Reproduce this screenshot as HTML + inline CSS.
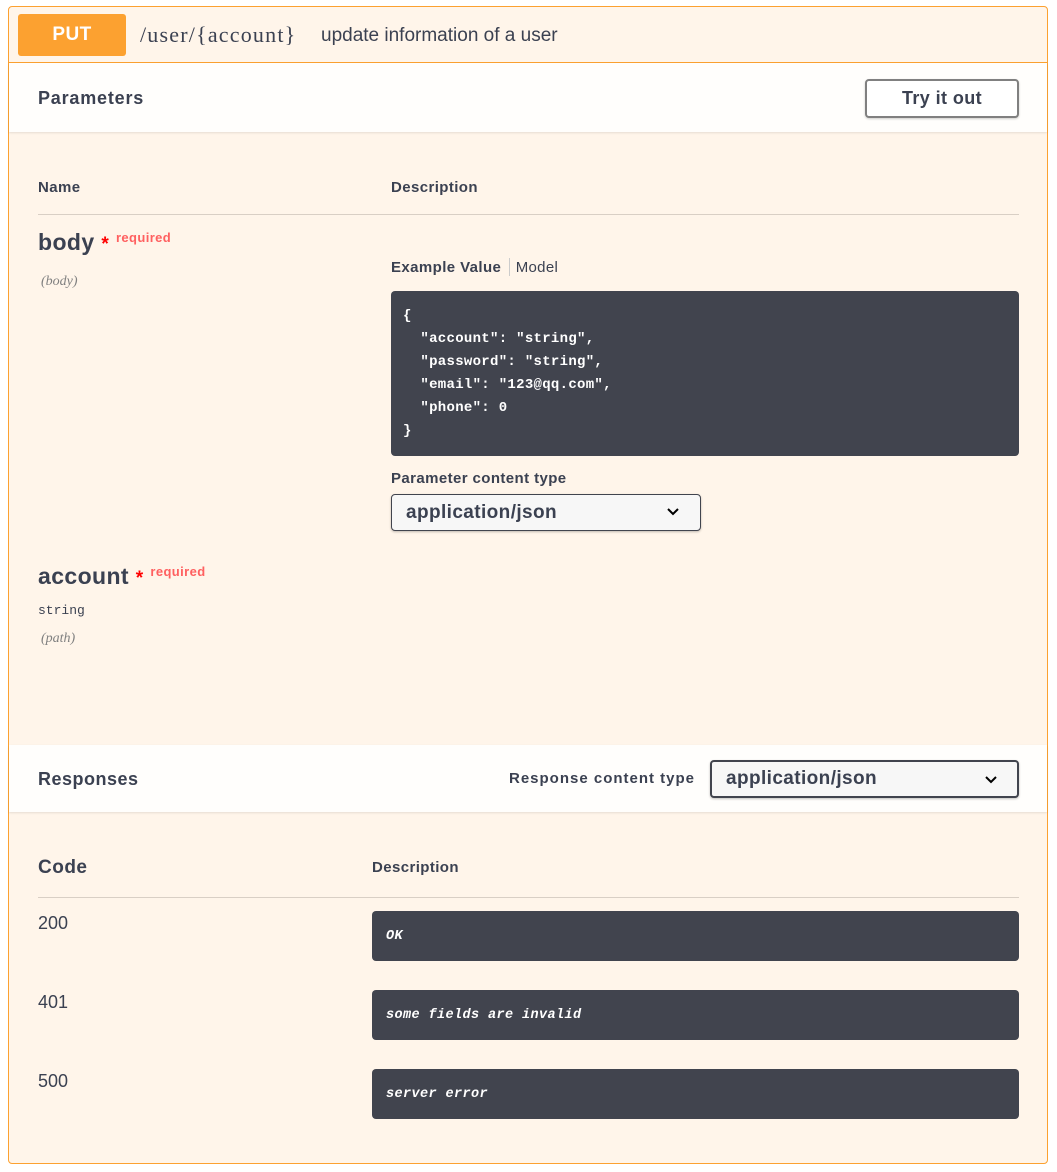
<!DOCTYPE html>
<html><head><meta charset="utf-8"><style>
*{margin:0;padding:0;box-sizing:border-box}
body{width:1057px;height:1172px;background:#fff;font-family:"Liberation Sans",sans-serif;color:#3b4151;position:relative;overflow:hidden}
.a{position:absolute}
.box{left:8px;top:6px;width:1040px;height:1158px;border:1px solid #fca130;border-radius:4px;background:#fff5ea}
.b{font-weight:bold;letter-spacing:.4px}
.dark{background:#41444e;border-radius:4px}
.mono{font-family:"Liberation Mono",monospace;color:#fff;font-weight:bold}
.sel{border:1px solid #41444e;border-radius:4px;background:#f7f7f7;box-shadow:0 1px 2px rgba(0,0,0,.25)}
</style></head><body>
<div class="a box"></div>
<div class="a" style="left:9px;top:62px;width:1038px;height:1px;background:#fca130"></div>
<div class="a b" style="left:18px;top:14px;width:108px;height:42px;background:#fca130;border-radius:3px;color:#fff;font-size:19px;text-align:center;line-height:42px">PUT</div>
<div class="a" style="left:140px;top:22px;font-family:'Liberation Serif',serif;font-size:22px;letter-spacing:1.2px;color:#3b4151">/user/{account}</div>
<div class="a" style="left:321px;top:25px;font-size:19px;color:#3b4151">update information of a user</div>

<div class="a" style="left:9px;top:63px;width:1038px;height:69px;background:rgba(255,255,255,.85);box-shadow:0 1px 2px rgba(0,0,0,.1)"></div>
<div class="a b" style="left:38px;top:88px;font-size:18px;letter-spacing:.8px">Parameters</div>
<div class="a b" style="left:865px;top:79px;width:154px;height:39px;border:2px solid #808080;border-radius:4px;background:#fff;font-size:18px;text-align:center;line-height:35px;box-shadow:0 1px 2px rgba(0,0,0,.2)">Try it out</div>

<div class="a b" style="left:38px;top:179px;font-size:15px">Name</div>
<div class="a b" style="left:391px;top:179px;font-size:15px">Description</div>
<div class="a" style="left:38px;top:214px;width:981px;height:1px;background:#d9cfc5"></div>

<div class="a b" style="left:38px;top:229px;font-size:23px">body <span style="color:#f00;font-size:19px">*</span> <span style="color:#ff6060;font-size:13px;vertical-align:8px">required</span></div>
<div class="a" style="left:41px;top:274px;font-family:'Liberation Serif',serif;font-style:italic;font-size:14px;color:#808080">(body)</div>

<div class="a" style="left:391px;top:258px;font-size:15px;letter-spacing:.3px"><span class="b">Example Value</span> <span style="display:inline-block;width:1px;height:18px;background:#ccc;vertical-align:-4px;margin:0 6px 0 3px"></span>Model</div>
<div class="a dark" style="left:391px;top:291px;width:628px;height:165px"></div>
<pre class="a mono" style="left:403px;top:305px;font-size:14px;line-height:23px;letter-spacing:.3px">{
  "account": "string",
  "password": "string",
  "email": "123@qq.com",
  "phone": 0
}</pre>
<div class="a b" style="left:391px;top:470px;font-size:15px">Parameter content type</div>
<div class="a sel b" style="left:391px;top:494px;width:310px;height:37px;font-size:19px;padding-left:14px;line-height:35px">application/json</div>
<svg class="a" style="left:666px;top:507px" width="14" height="10"><path d="M2 2l5 5 5-5" stroke="#000" stroke-width="2" fill="none"/></svg>

<div class="a b" style="left:38px;top:563px;font-size:23px">account <span style="color:#f00;font-size:19px">*</span> <span style="color:#ff6060;font-size:13px;vertical-align:8px">required</span></div>
<div class="a" style="left:38px;top:603px;font-family:'Liberation Mono',monospace;font-size:13px;color:#3b4151">string</div>
<div class="a" style="left:41px;top:631px;font-family:'Liberation Serif',serif;font-style:italic;font-size:14px;color:#808080">(path)</div>

<div class="a" style="left:9px;top:745px;width:1038px;height:67px;background:rgba(255,255,255,.85);box-shadow:0 1px 2px rgba(0,0,0,.1)"></div>
<div class="a b" style="left:38px;top:769px;font-size:18px;letter-spacing:.5px">Responses</div>
<div class="a b" style="left:509px;top:770px;font-size:15px;letter-spacing:1px">Response content type</div>
<div class="a sel b" style="left:710px;top:760px;width:309px;height:38px;border-width:2px;font-size:19px;padding-left:14px;line-height:34px">application/json</div>
<svg class="a" style="left:984px;top:775px" width="14" height="10"><path d="M2 2l5 5 5-5" stroke="#000" stroke-width="2" fill="none"/></svg>

<div class="a b" style="left:38px;top:857px;font-size:19px;letter-spacing:.5px">Code</div>
<div class="a b" style="left:372px;top:859px;font-size:15px">Description</div>
<div class="a" style="left:38px;top:897px;width:981px;height:1px;background:#d9cfc5"></div>

<div class="a" style="left:38px;top:913px;font-size:18px">200</div>
<div class="a dark" style="left:372px;top:911px;width:647px;height:50px"></div>
<div class="a mono" style="left:386px;top:929px;font-size:13.5px;font-style:italic;letter-spacing:.4px">OK</div>
<div class="a" style="left:38px;top:992px;font-size:18px">401</div>
<div class="a dark" style="left:372px;top:990px;width:647px;height:50px"></div>
<div class="a mono" style="left:386px;top:1008px;font-size:13.5px;font-style:italic;letter-spacing:.4px">some fields are invalid</div>
<div class="a" style="left:38px;top:1071px;font-size:18px">500</div>
<div class="a dark" style="left:372px;top:1069px;width:647px;height:50px"></div>
<div class="a mono" style="left:386px;top:1087px;font-size:13.5px;font-style:italic;letter-spacing:.4px">server error</div>
</body></html>
